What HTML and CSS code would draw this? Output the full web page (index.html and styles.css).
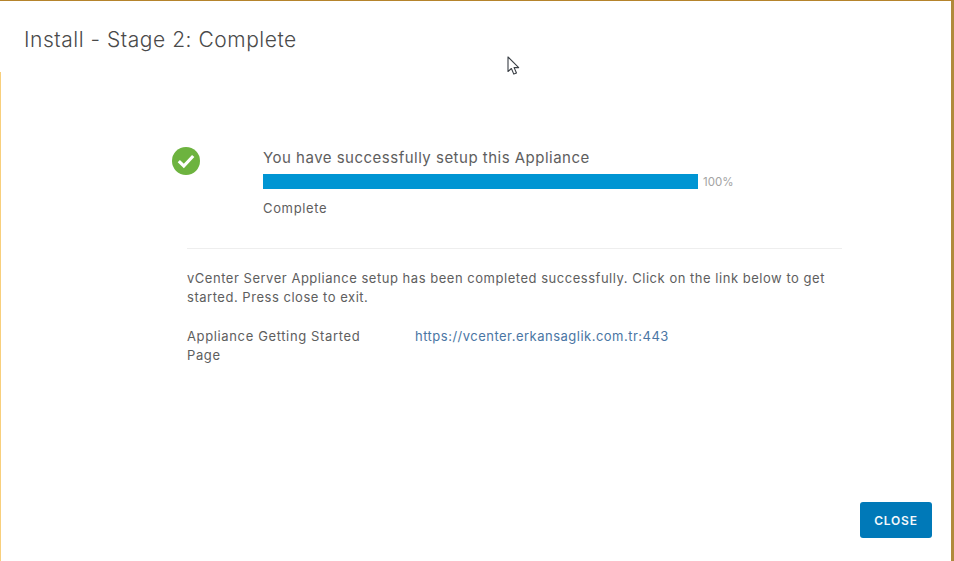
FILE: index.html
```html
<!DOCTYPE html>
<html lang="en">
<head>
<meta charset="utf-8">
<title>Install - Stage 2: Complete</title>
<link rel="stylesheet" href="styles.css">
</head>
<body>
<div class="frame">
  <div class="dialog">
    <header class="header"><h1 class="title">Install - Stage 2: Complete</h1></header>
    <main class="content">
      <section class="status">
        <svg class="check" viewBox="0 0 28 28" width="28" height="28" aria-hidden="true">
          <circle cx="14" cy="14" r="14" fill="#6db33f"/>
          <path d="M6.8 14.2l5 4.8 9.4-10" fill="none" stroke="#fff" stroke-width="3.2"/>
        </svg>
        <div class="progress-block">
          <div class="status-title">You have successfully setup this Appliance</div>
          <div class="progress-row">
            <div class="bar"></div>
            <span class="percent">100%</span>
          </div>
          <div class="status-label">Complete</div>
        </div>
      </section>
      <hr class="divider">
      <p class="message">vCenter Server Appliance setup has been completed successfully. Click on the link below to get started. Press close to exit.</p>
      <div class="link-row">
        <div class="link-label">Appliance Getting Started Page</div>
        <a class="link" href="#">https://vcenter.erkansaglik.com.tr:443</a>
      </div>
    </main>
    <footer class="footer"><button class="close" type="button">CLOSE</button></footer>
  </div>
</div>
<svg class="cursor" viewBox="0 0 14 20" width="14" height="20" aria-hidden="true">
  <path d="M1 1v14.5l3.4-3 2.4 5.6 2.7-1.1-2.4-5.4h4.6z" fill="#fff" stroke="#3a3f45" stroke-width="1.1" stroke-linejoin="round"/>
</svg>
</body>
</html>
```

FILE: styles.css
```css
* { box-sizing: border-box; }
html, body { margin: 0; padding: 0; height: 100%; background: #fff; }
body { font-family: "Inter", "Liberation Sans", sans-serif; color: #5e5e5e; overflow: hidden; }
.frame {
  height: 561px;
  border-top: 1px solid #b5842c;
  border-right: 3px solid;
  border-right-color: #b08a3c;
  background: linear-gradient(#fff 71px, #f8cf7c 71px) left top / 1px 100% no-repeat #fff;
}
.dialog { height: 100%; display: flex; flex-direction: column; }
.header { padding: 24px 24px 0; height: 71px; }
.title { margin: 0; font-size: 21px; line-height: 30px; font-weight: 300; color: #4a4a4a; letter-spacing: 0.53px; }
.content { flex: 1; padding: 75px 109px 0 172px; font-size: 13px; font-weight: 400; letter-spacing: 0.55px; }
.status { display: flex; }
.check { flex: none; }
.progress-block { margin-left: 63px; }
.status-title { font-size: 15px; line-height: 20px; margin-top: 1px; letter-spacing: 0.49px; color: #5e5e5e; }
.progress-row { display: flex; align-items: center; margin-top: 6px; height: 15px; }
.bar { width: 435px; height: 15px; background: #0095d3; }
.percent { margin-left: 5px; font-size: 11.5px; color: #a3a3a3; letter-spacing: 0; }
.status-label { margin-top: 9px; line-height: 20px; letter-spacing: 0.65px; }
.divider { margin: 30px 0 0 15px; border: 0; height: 1px; background: #eeeeee; }
.message { margin: 20px 0 0 15px; line-height: 19px; width: 650px; letter-spacing: 0.525px; }
.link-row { display: flex; margin: 20px 0 0 15px; line-height: 19px; }
.link-label { width: 228px; padding-right: 40px; letter-spacing: 0.63px; }
.link { color: #4a76a4; text-decoration: none; letter-spacing: 0.49px; }
.footer { display: flex; justify-content: flex-end; padding: 0 19px 23px 0; }
.close {
  width: 72px; height: 36px; border: 0; border-radius: 3px;
  background: #0079b8; color: #f4f8fb;
  font-family: inherit; font-size: 12px; font-weight: 600; letter-spacing: 0.8px;
}
.cursor { position: absolute; left: 507px; top: 56px; }
```
